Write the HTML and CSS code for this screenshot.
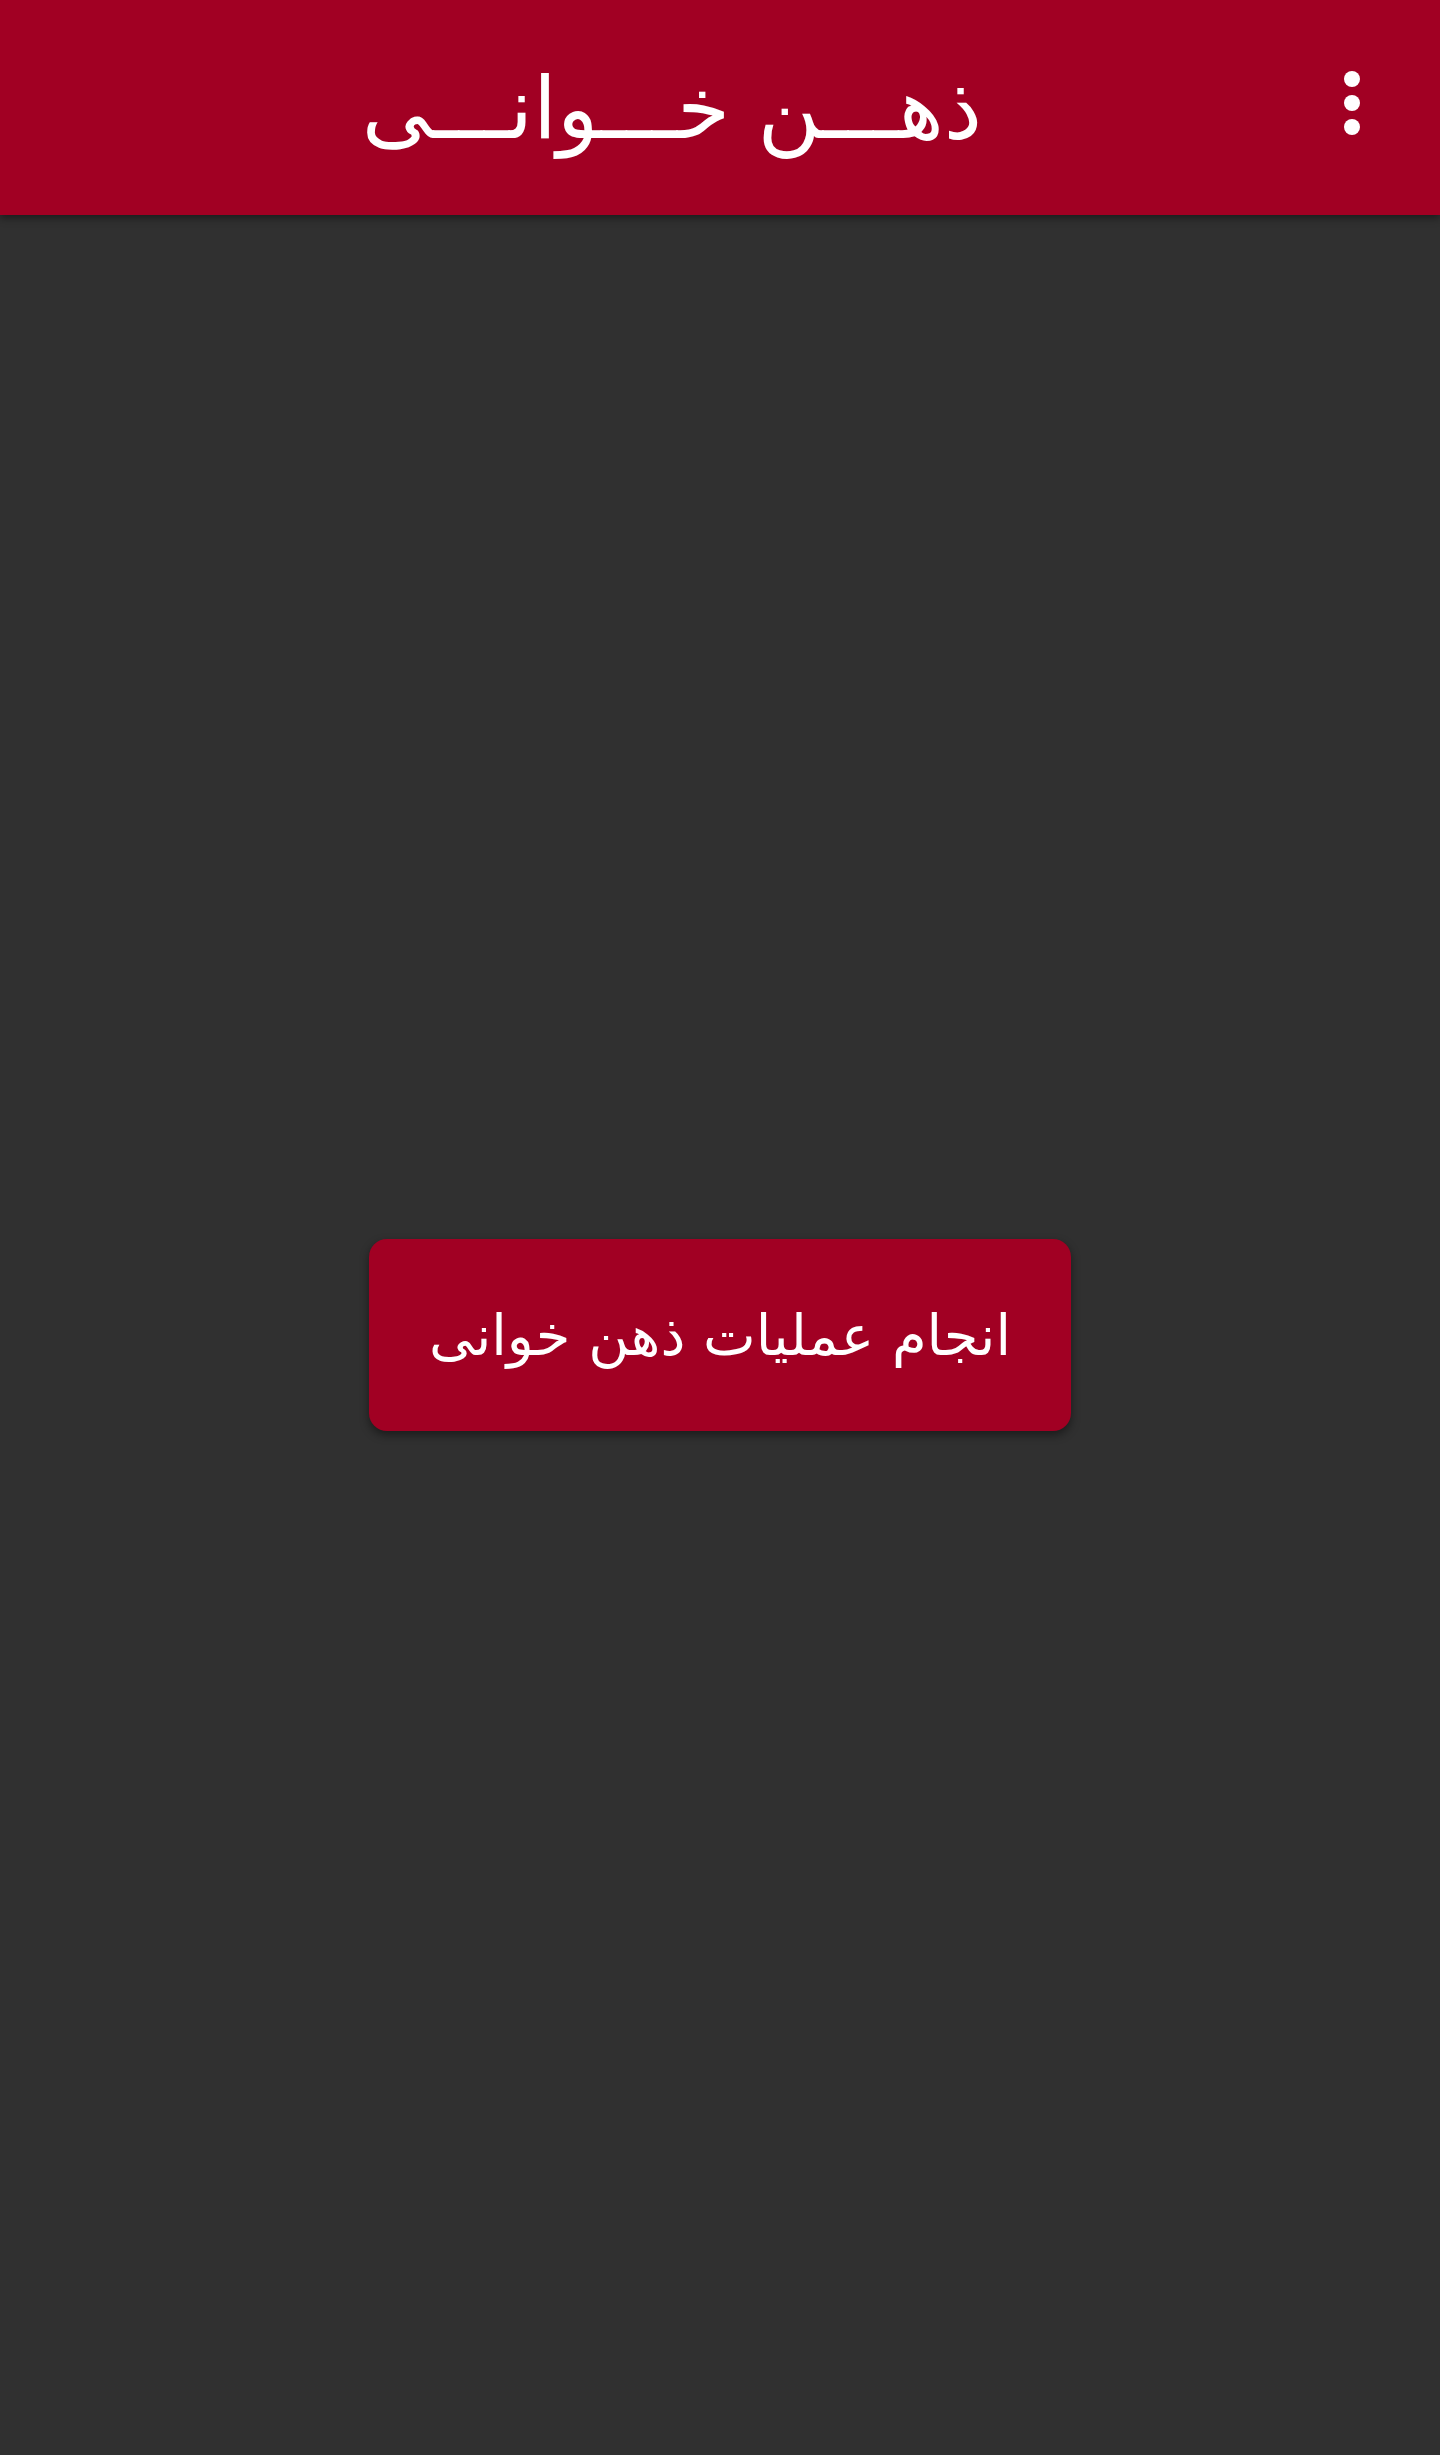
FILE: index.html
```html
<!DOCTYPE html>
<html lang="fa" dir="rtl">
<head>
<meta charset="utf-8">
<title>ذهن خوانی</title>
<link rel="stylesheet" href="styles.css">
</head>
<body>
<div class="app">
  <header class="toolbar">
    <div class="menu" aria-label="menu">
      <span class="dot"></span>
      <span class="dot"></span>
      <span class="dot"></span>
    </div>
    <h1 class="title">ذهـــن خـــوانـــی</h1>
  </header>
  <main class="content">
    <button class="action">انجام عملیات ذهن خوانی</button>
  </main>
</div>
</body>
</html>
```
FILE: styles.css
```css
html, body {
  margin: 0;
  padding: 0;
  height: 100%;
}
body {
  background: #303030;
  font-family: "DejaVu Sans", sans-serif;
}
.app {
  display: flex;
  flex-direction: column;
  height: 2455px;
}
.toolbar {
  position: relative;
  z-index: 1;
  height: 215px;
  flex: 0 0 215px;
  background: #a10023;
  display: flex;
  flex-direction: row;
  align-items: center;
  box-shadow: 0 3px 8px rgba(0, 0, 0, 0.45);
}
.menu {
  width: 96px;
  flex: 0 0 96px;
  display: flex;
  flex-direction: column;
  align-items: flex-end;
  gap: 8px;
  padding-bottom: 10px;
}
.dot {
  display: block;
  width: 16px;
  height: 16px;
  border-radius: 50%;
  background: #ffffff;
}
.title {
  flex: 1;
  margin: 0;
  text-align: center;
  color: #ffffff;
  font-weight: normal;
  font-size: 86px;
  line-height: 1;
}
.content {
  flex: 1;
  display: flex;
  align-items: center;
  justify-content: center;
}
.action {
  width: 702px;
  height: 192px;
  border: none;
  border-radius: 18px;
  background: #a10023;
  color: #ffffff;
  font-family: "DejaVu Sans", sans-serif;
  font-size: 56px;
  box-shadow: 0 4px 10px rgba(0, 0, 0, 0.45);
  padding: 0;
}
```
